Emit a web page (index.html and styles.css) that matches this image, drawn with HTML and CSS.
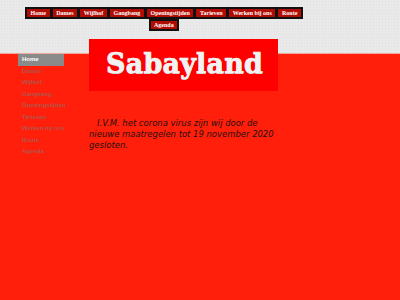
FILE: index.html
```html
<!DOCTYPE html>
<html lang="nl">
<head>
<meta charset="utf-8">
<title>Sabayland</title>
<link rel="stylesheet" href="styles.css">
</head>
<body>
<header class="top">
  <nav class="topnav">
    <div class="row row-main">
      <a class="item">Home</a>
      <a class="item">Dames</a>
      <a class="item">Wijlhof</a>
      <a class="item">Gangbang</a>
      <a class="item">Openingstijden</a>
      <a class="item">Tarieven</a>
      <a class="item">Werken bij ons</a>
      <a class="item">Route</a>
    </div>
    <div class="row row-sub">
      <a class="item">Agenda</a>
    </div>
  </nav>
</header>
<div class="page">
  <ul class="side">
    <li class="active">Home</li>
    <li>Dames</li>
    <li>Wijlhof</li>
    <li>Gangbang</li>
    <li>Openingstijden</li>
    <li>Tarieven</li>
    <li>Werken bij ons</li>
    <li>Route</li>
    <li>Agenda</li>
  </ul>
  <main class="content">
    <div class="logo">Sabayland</div>
    <p class="notice">&nbsp;&nbsp;&nbsp;I.V.M. het corona virus zijn wij door de nieuwe maatregelen tot 19 november 2020 gesloten.</p>
  </main>
</div>
</body>
</html>
```
FILE: styles.css
```css
html, body {
  margin: 0;
  padding: 0;
}
body {
  background: #ff1f0b;
  width: 400px;
  height: 300px;
  overflow: hidden;
  font-family: "Liberation Sans", Arial, sans-serif;
}
.top {
  height: 54px;
  background-color: #e9e9e9;
  background-image: radial-gradient(#e0e0e0 0.6px, transparent 0.8px);
  background-size: 3px 3px;
  border-bottom: 1px solid #f3a79c;
  padding: 7px 0 0 25px;
  box-sizing: border-box;
}
.topnav {
  display: flex;
  flex-direction: column;
  align-items: flex-start;
}
.row {
  display: flex;
  gap: 3px;
  background: #111;
  padding: 2px;
}
.row-main {
  width: 278px;
  box-sizing: border-box;
}
.row-main .item {
  flex: 1 1 auto;
}
.row-sub {
  margin-left: 124px;
  padding-top: 2px;
}
.item {
  display: block;
  background: #b20d04;
  color: #fff;
  font-family: "Liberation Serif", "Times New Roman", serif;
  font-weight: bold;
  font-size: 6px;
  line-height: 8px;
  height: 8px;
  padding: 0 3px;
  text-align: center;
  white-space: nowrap;
}
.page {
  display: grid;
  grid-template-columns: 46px 1fr;
  column-gap: 25px;
  padding-left: 18px;
}
.side {
  list-style: none;
  margin: 0;
  padding: 0;
}
.side li {
  font-size: 6px;
  font-weight: bold;
  color: #b5554a;
  height: 11.5px;
  line-height: 11.5px;
  padding-left: 4px;
  white-space: nowrap;
}
.side li.active {
  background: #8a8a8a;
  color: #fff;
}
.content {
  margin-top: -15px;
}
.logo {
  width: 189px;
  height: 52px;
  background: #ff0000;
  color: #f2f2f2;
  font-family: "DejaVu Serif", serif;
  font-weight: bold;
  font-size: 27px;
  line-height: 50px;
  padding-left: 17px;
  box-sizing: border-box;
  text-shadow: 0 1px 0 #c9c9c9;
  -webkit-text-stroke: 0.7px #f2f2f2;
  letter-spacing: 0.2px;
}
.notice {
  margin: 27px 0 0 0;
  width: 192px;
  font-family: "DejaVu Sans", Verdana, sans-serif;
  font-style: italic;
  font-size: 8.45px;
  line-height: 11px;
  color: #1e120d;
}
```
